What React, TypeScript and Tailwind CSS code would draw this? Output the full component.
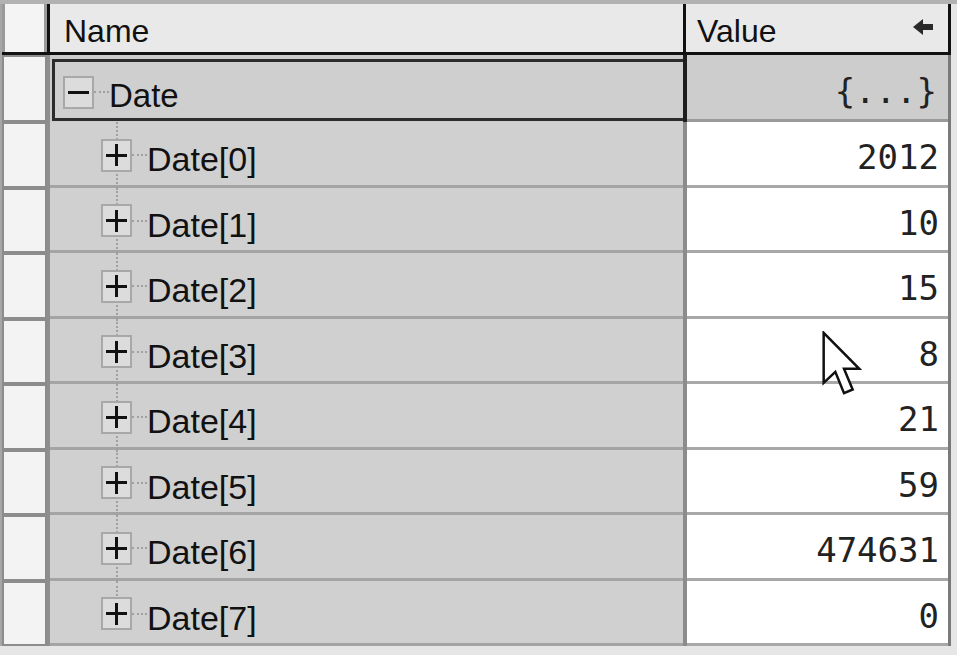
import React from 'react'

const items = [
    { name: 'Date[0]', value: '2012' },
    { name: 'Date[1]', value: '10' },
    { name: 'Date[2]', value: '15' },
    { name: 'Date[3]', value: '8' },
    { name: 'Date[4]', value: '21' },
    { name: 'Date[5]', value: '59' },
    { name: 'Date[6]', value: '474631' },
    { name: 'Date[7]', value: '0' },
]

function GutterCell() {
    return (
        <div className="w-[45px] shrink-0 border-2 border-[#8c8c8c] bg-[#f3f3f3]" />
    )
}

function ExpandBox({ open }: { open?: boolean }) {
    return (
        <div className="relative z-10 flex h-[33px] w-[31px] shrink-0 items-center justify-center border-2 border-[#a8a8a8] bg-[#dcdcdc]">
            <div className="absolute h-[3px] w-[21px] bg-[#111]" />
            {!open && <div className="absolute h-[22px] w-[3px] bg-[#111]" />}
        </div>
    )
}

function ChildRow({ name, value, last }: { name: string; value: string; last: boolean }) {
    return (
        <div className="flex h-[65.5px]">
            <GutterCell />
            <div className="w-[3px] shrink-0 bg-[#8e8e8e]" />
            <div className="relative flex w-[633px] shrink-0 items-center border-b-[3px] border-[#a4a4a4] bg-[#d0d0d0] pl-[51px] pt-[4px]">
                {/* tree guide */}
                <div
                    className={
                        last
                            ? 'absolute left-[66px] top-0 h-1/2 border-l-2 border-dotted border-[#a0a0a0]'
                            : 'absolute left-[66px] top-0 -bottom-[3px] border-l-2 border-dotted border-[#a0a0a0]'
                    }
                />
                <ExpandBox />
                <div className="w-[15px] border-t-2 border-dotted border-[#a0a0a0]" />
                <span className="pt-[8px] text-[34px] leading-none text-[#111]">{name}</span>
            </div>
            <div className="w-[4px] shrink-0 bg-[#8c8c8c]" />
            <div className="flex w-[261px] shrink-0 items-center justify-end border-b-[3px] border-[#a8a8a8] bg-white pr-[9px] pt-[8px] font-['DejaVu_Sans_Mono'] text-[34px] leading-none text-[#222]">
                {value}
            </div>
            <div className="w-[3px] shrink-0 bg-[#7a7a7a]" />
        </div>
    )
}

function Cursor() {
    return (
        <svg
            className="absolute left-[822px] top-[331px]"
            width="40"
            height="67"
            viewBox="0 0 12 20"
        >
            <path
                d="M0.5 0.5 L0.5 15.5 L4 12.2 L6.6 18.6 L9.2 17.5 L6.6 11.3 L11.2 11.3 Z"
                fill="#fff"
                stroke="#111"
                strokeWidth="0.75"
                strokeLinejoin="miter"
            />
        </svg>
    )
}

export default function App() {
    return (
        <div className="relative h-[655px] w-[957px] overflow-hidden bg-[#e6e6e6] font-['Liberation_Sans',Arial,sans-serif]">
            <div className="h-[4px] bg-[#b2b2b2]" />
            <div className="border-l-2 border-[#a6a6a6]">
                {/* header */}
                <div className="flex h-[48px]">
                    <div className="w-[45px] shrink-0 border-x-[3px] border-[#9a9a9a] bg-[#f4f4f4]" />
                    <div className="w-[3px] shrink-0 bg-[#111]" />
                    <div className="flex w-[633px] shrink-0 items-center bg-[#e9e9e9] pl-[14px] pt-[6px] text-[32px] leading-none text-[#111]">
                        Name
                    </div>
                    <div className="w-[3px] shrink-0 bg-[#111]" />
                    <div className="flex w-[262px] shrink-0 items-center justify-between bg-[#e9e9e9] pl-[11px] pr-[13px] pt-[6px] text-[32px] leading-none text-[#111]">
                        <span>Value</span>
                        <svg width="22" height="16" viewBox="0 0 22 16" className="mb-[8px]">
                            <path d="M0 8 L10 0 L10 5 L20 5 L20 11 L10 11 L10 16 Z" fill="#2a2a2a" />
                        </svg>
                    </div>
                    <div className="w-[3px] shrink-0 bg-[#111]" />
                </div>
                <div className="h-[3px] w-[949px] bg-[#111]" />

                {/* Date row */}
                <div className="flex h-[67px]">
                    <GutterCell />
                    <div className="w-[3px] shrink-0 bg-[#8e8e8e]" />
                    <div className="w-[633px] shrink-0 bg-[#cbcbcb] pb-[1px] pl-[2px] pt-[4px]">
                        <div className="flex h-full items-center border-[3px] border-r-0 border-[#2c2c2c] bg-[#cfcfcf] pl-[8px] pt-[4px]">
                            <ExpandBox open />
                            <div className="w-[15px] border-t-2 border-dotted border-[#a0a0a0]" />
                            <span className="pt-[6px] text-[33px] leading-none text-[#111]">Date</span>
                        </div>
                    </div>
                    <div className="w-[4px] shrink-0 bg-[#1e1e1e]" />
                    <div className="flex w-[261px] shrink-0 items-center justify-end border-b-[3px] border-[#9a9a9a] bg-[#cdcdcd] pr-[11px] pt-[8px] font-['DejaVu_Sans_Mono'] text-[34px] leading-none text-[#222]">
                        {'{...}'}
                    </div>
                    <div className="w-[3px] shrink-0 bg-[#7a7a7a]" />
                </div>

                {items.map((it, i) => (
                    <ChildRow key={it.name} name={it.name} value={it.value} last={i === items.length - 1} />
                ))}
            </div>
            <Cursor />
        </div>
    )
}
